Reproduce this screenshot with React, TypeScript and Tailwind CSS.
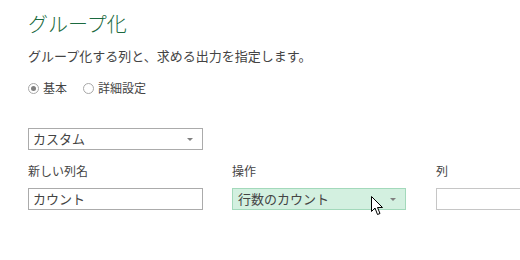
import { ReactNode } from 'react';

const font = { fontFamily: '"Noto Sans CJK JP", "Noto Sans", sans-serif' };

const Caret = () => (
  <svg width="6" height="3" viewBox="0 0 6 3" className="shrink-0">
    <path d="M0 0h6L3 3z" fill="#808080" />
  </svg>
);

const Radio = ({ checked, label }: { checked?: boolean; label: string }) => (
  <label className="flex items-center gap-[4px]">
    <span className="w-[11px] h-[11px] rounded-full border border-[#a8a8a8] bg-white flex items-center justify-center">
      {checked && <span className="w-[5px] h-[5px] rounded-full bg-[#808080]" />}
    </span>
    <span>{label}</span>
  </label>
);

const Field = ({ label, width, children }: { label: string; width: string; children: ReactNode }) => (
  <div className={`flex flex-col shrink-0 ${width}`}>
    <div className="text-[12px] leading-[18px] text-[#444]">{label}</div>
    <div className="mt-[8px]">{children}</div>
  </div>
);

const Cursor = () => (
  <svg width="13" height="20" viewBox="0 0 13 20" className="absolute left-[371px] top-[196px]">
    <path
      d="M0.5 0.5 L0.5 15.5 L4 12 L6.5 18.5 L9 17.5 L6.5 11.5 L11.5 11.5 Z"
      fill="#fff"
      stroke="#000"
      strokeWidth="1"
      strokeLinejoin="round"
    />
  </svg>
);

export default function App() {
  return (
    <div className="relative w-[520px] h-[260px] overflow-hidden bg-white pl-[28px] pt-[12px] text-[#444]" style={font}>
      <h1 className="text-[20px] leading-[24px] font-light text-[#1b6a40]">グループ化</h1>
      <p className="mt-[10px] text-[13px] leading-[20px]">グループ化する列と、求める出力を指定します。</p>

      <div className="mt-[12px] flex items-center gap-[16px] text-[12px] leading-[20px]">
        <Radio checked label="基本" />
        <Radio label="詳細設定" />
      </div>

      <div className="mt-[30px] w-[175px] h-[22px] border border-[#ababab] flex items-center justify-between pl-[4px] pr-[9px] text-[13px]">
        <span>カスタム</span>
        <Caret />
      </div>

      <div className="mt-[12px] flex">
        <Field label="新しい列名" width="w-[175px]">
          <div className="h-[22px] border border-[#ababab] flex items-center pl-[4px] text-[13px]">カウント</div>
        </Field>
        <div className="w-[29px] shrink-0" />
        <Field label="操作" width="w-[174px]">
          <div className="h-[22px] border border-[#a3d9bb] bg-[#d3f0e0] flex items-center justify-between pl-[5px] pr-[9px] text-[13px]">
            <span>行数のカウント</span>
            <Caret />
          </div>
        </Field>
        <div className="w-[30px] shrink-0" />
        <Field label="列" width="w-[175px]">
          <div className="h-[22px] border border-[#c6c6c6] bg-white" />
        </Field>
      </div>

      <Cursor />
    </div>
  );
}
